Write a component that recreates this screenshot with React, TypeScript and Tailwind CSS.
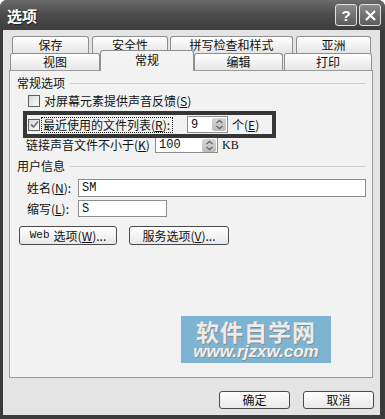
import React from "react";

const cjk = "font-['Noto_Sans_CJK_SC','Noto_Sans_CJK_SC',sans-serif]";

function U({ c }: { c: string }) {
  return <span className="underline underline-offset-[1px]">{c}</span>;
}

function Spinner() {
  return (
    <div className="w-[14px] h-[13px] rounded-[2px] bg-gradient-to-b from-[#d6d6d6] to-[#bcbcbc] flex items-center justify-center">
      <svg width="9" height="11" viewBox="0 0 9 11">
        <path d="M1.5 4 L4.5 1.5 L7.5 4" fill="none" stroke="#6a6a6a" strokeWidth="1.4" />
        <path d="M1.5 7 L4.5 9.5 L7.5 7" fill="none" stroke="#6a6a6a" strokeWidth="1.4" />
      </svg>
    </div>
  );
}

function Checkbox({ checked }: { checked?: boolean }) {
  return (
    <div className="w-[12px] h-[12px] border border-[#5e5e5e] bg-gradient-to-br from-[#d9d9d9] to-[#fbfbfb] flex items-center justify-center shrink-0">
      {checked && (
        <svg width="9" height="9" viewBox="0 0 9 9">
          <path d="M1 4.5 L3.5 7 L8 1.5" fill="none" stroke="#7a7a7a" strokeWidth="1.8" />
        </svg>
      )}
    </div>
  );
}

function GroupHeader({ label }: { label: string }) {
  return (
    <div className="flex items-center h-[14px] pl-[7px] pr-[6px]">
      <span className="text-[12px] leading-none text-[#111]">{label}</span>
      <div className="flex-1 h-px bg-[#cfcfcf] ml-[5px] mt-[1px]" />
    </div>
  );
}

function TabBtn({ label, cls }: { label: string; cls: string }) {
  return (
    <div
      className={`h-[17px] border border-b-0 border-[#8f8f8f] rounded-t-[3px] bg-gradient-to-b from-[#ffffff] to-[#e6e6e6] flex items-center justify-center text-[12px] leading-none text-[#111] ${cls}`}
    >
      {label}
    </div>
  );
}

export default function App() {
  return (
    <div className={`w-[385px] h-[419px] bg-[#3b3b3b] rounded-t-[7px] flex flex-col ${cjk}`}>
      {/* Title bar */}
      <div className="h-[30px] rounded-t-[7px] bg-gradient-to-b from-[#6b6b6b] via-[#4a4a4a] to-[#3e3e3e] flex items-center justify-between pl-[7px] pr-[4px]">
        <span className="text-white font-bold text-[15px] leading-none [text-shadow:1px_1px_0_#222]">选项</span>
        <div className="flex gap-[2px]">
          <div className="w-[22px] h-[22px] rounded-[3px] border border-[#e0e0e0] bg-gradient-to-b from-[#8a8a8a] to-[#5c5c5c] flex items-center justify-center text-white text-[15px] font-bold leading-none font-['Liberation_Sans',sans-serif]">
            ?
          </div>
          <div className="w-[22px] h-[22px] rounded-[3px] border border-[#e0e0e0] bg-gradient-to-b from-[#8a8a8a] to-[#5c5c5c] flex items-center justify-center">
            <svg width="13" height="13" viewBox="0 0 13 13">
              <path d="M2 2 L11 11 M11 2 L2 11" stroke="#fff" strokeWidth="2.2" />
            </svg>
          </div>
        </div>
      </div>

      {/* Body */}
      <div className="h-[385px] ml-[3px] mr-[5px] bg-[#e4e4e4] flex flex-col">
        {/* Tab row 1 */}
        <div className="flex mt-[6px] pl-[9px]">
          <TabBtn label="保存" cls="w-[77px]" />
          <TabBtn label="安全性" cls="w-[76px] ml-[3px]" />
          <TabBtn label="拼写检查和样式" cls="w-[123px] ml-[2px]" />
          <TabBtn label="亚洲" cls="w-[75px] ml-[3px]" />
        </div>
        {/* Tab row 2 */}
        <div className="flex items-start h-[17px] pl-[7px] relative z-10">
          <TabBtn label="视图" cls="w-[90px]" />
          <div className="w-[94px] h-[21px] -mt-[3px] border border-b-0 border-[#8f8f8f] rounded-t-[3px] bg-[#f3f3f3] flex items-start justify-center pt-[3px] text-[12px] leading-none text-[#111]">
            常规
          </div>
          <TabBtn label="编辑" cls="w-[89px]" />
          <TabBtn label="打印" cls="w-[88px] ml-[1px]" />
        </div>

        {/* Panel */}
        <div className="relative ml-[6px] w-[364px] h-[308px] border border-[#9a9a9a] bg-[#f2f2f2] flex flex-col text-[12px] leading-none text-[#111]">
          <div className="mt-[5px]">
            <GroupHeader label="常规选项" />
          </div>

          <div className="mt-[4px] h-[14px] flex items-center ml-[18px]">
            <Checkbox />
            <span className="ml-[4px]">
              对屏幕元素提供声音反馈(<U c="S" />)
            </span>
          </div>

          {/* highlighted row */}
          <div className="mt-[3px] ml-[13px] w-[253px] h-[27px] border-[4px] border-[#363636] flex items-center pl-[1px] relative z-10">
            <Checkbox checked />
            <div className="ml-[1px] w-[132px] h-[16px] border border-dotted border-[#222] flex items-center pl-[1px]">
              最近使用的文件列表(<U c="R" />):
            </div>
            <div className="ml-[14px] w-[41px] h-[17px] border border-[#8c8c8c] bg-white flex items-center justify-between pl-[3px] pr-[1px]">
              <span className="font-['Liberation_Mono',monospace] text-[12px]">9</span>
              <Spinner />
            </div>
            <span className="ml-[4px]">
              个(<U c="E" />)
            </span>
          </div>

          <div className="-mt-[1px] h-[16px] flex items-center ml-[16px]">
            <span className="w-[129px]">
              链接声音文件不小于(<U c="K" />)
            </span>
            <div className="w-[63px] h-[16px] border border-[#8c8c8c] bg-white flex items-center justify-between pl-[3px] pr-[1px]">
              <span className="font-['Liberation_Mono',monospace] text-[12px]">100</span>
              <Spinner />
            </div>
            <span className="ml-[4px] font-['Liberation_Serif',serif] text-[12px]">KB</span>
          </div>

          <div className="mt-[6px]">
            <GroupHeader label="用户信息" />
          </div>

          <div className="mt-[6px] h-[18px] flex items-center ml-[17px]">
            <span className="w-[51px]">
              姓名(<U c="N" />):
            </span>
            <div className="w-[288px] h-[18px] border border-[#8c8c8c] bg-white flex items-center pl-[3px] font-['Liberation_Mono',monospace] text-[12px]">
              SM
            </div>
          </div>

          <div className="mt-[3px] h-[17px] flex items-center ml-[17px]">
            <span className="w-[51px]">
              缩写(<U c="L" />):
            </span>
            <div className="w-[89px] h-[17px] border border-[#8c8c8c] bg-white flex items-center pl-[3px] font-['Liberation_Mono',monospace] text-[12px]">
              S
            </div>
          </div>

          <div className="mt-[9px] flex ml-[9px]">
            <div className="w-[98px] h-[19px] rounded-[3px] border border-[#4a4a4a] bg-gradient-to-b from-white to-[#e8e8e8] flex items-center justify-center">
              <span className="font-['Liberation_Mono',monospace] text-[11px]">Web</span>
              <span className="ml-[4px]">
                选项(<U c="W" />)...
              </span>
            </div>
            <div className="ml-[12px] w-[100px] h-[19px] rounded-[3px] border border-[#4a4a4a] bg-gradient-to-b from-white to-[#e8e8e8] flex items-center justify-center">
              服务选项(<U c="V" />)...
            </div>
          </div>

          {/* watermark */}
          <div className="absolute left-[171px] top-[245px] w-[150px] h-[47px] bg-[#7db4d2] flex flex-col items-center justify-center">
            <span className="h-[24px] text-[23px] font-bold leading-[24px] text-[#ececec] tracking-[1px] [text-shadow:1px_1px_0_#8a8a8a]">
              软件自学网
            </span>
            <span className="h-[18px] text-[17px] font-bold italic leading-[18px] text-[#f0f0f0] font-['Liberation_Sans',sans-serif] [text-shadow:1px_1px_0_#8a8a8a]">
              www.rjzxw.com
            </span>
          </div>
        </div>

        {/* bottom buttons */}
        <div className="mt-[13px] flex justify-end pr-[6px] gap-[13px] text-[12px] leading-none text-[#111]">
          <div className="w-[71px] h-[18px] rounded-[3px] border border-[#4a4a4a] bg-gradient-to-b from-white to-[#e8e8e8] flex items-center justify-center">
            确定
          </div>
          <div className="w-[71px] h-[18px] rounded-[3px] border border-[#4a4a4a] bg-gradient-to-b from-white to-[#e8e8e8] flex items-center justify-center">
            取消
          </div>
        </div>
      </div>
    </div>
  );
}
